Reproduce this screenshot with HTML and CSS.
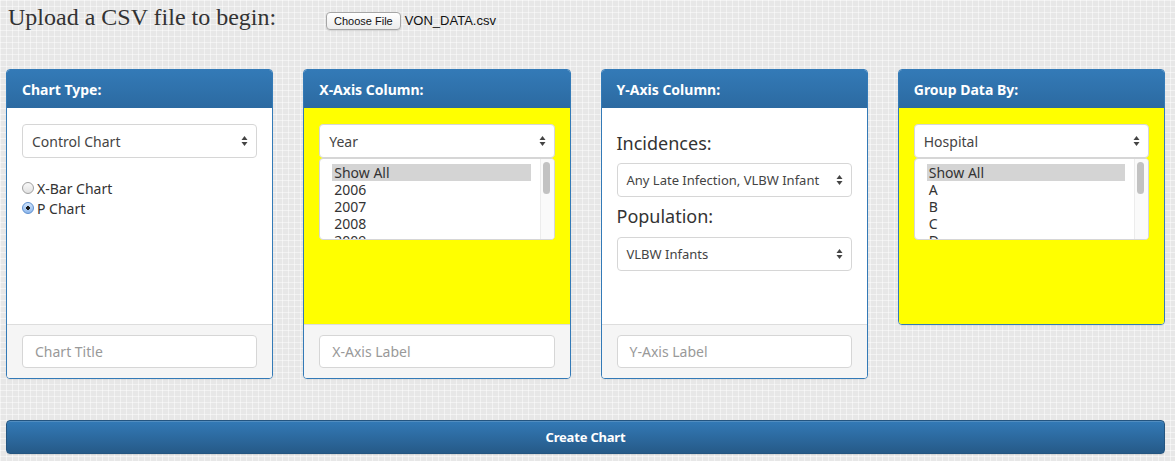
FILE: index.html
```html
<!DOCTYPE html>
<html>
<head>
<meta charset="utf-8">
<title>Control Chart Builder</title>
<link rel="stylesheet" href="styles.css">
</head>
<body>
<div class="upload-row">
  <h1 class="upload-title">Upload a CSV file to begin:</h1>
  <span class="file-btn">Choose File</span>
  <span class="file-name">VON_DATA.csv</span>
</div>

<div class="panels">
  <section class="panel">
    <div class="panel-heading">Chart Type:</div>
    <div class="panel-body">
      <div class="select"><span>Control Chart</span><svg class="arrows" width="7" height="12" viewBox="0 0 7 12"><path d="M3.5 1 L6.5 5 L0.5 5 Z M3.5 11 L6.5 7 L0.5 7 Z" fill="#444"/></svg></div>
      <div class="radios">
        <label class="radio"><span class="radio-dot"></span>X-Bar Chart</label>
        <label class="radio"><span class="radio-dot checked"></span>P Chart</label>
      </div>
    </div>
    <div class="panel-footer"><div class="text-input">Chart Title</div></div>
  </section>

  <section class="panel">
    <div class="panel-heading">X-Axis Column:</div>
    <div class="panel-body yellow">
      <div class="select"><span>Year</span><svg class="arrows" width="7" height="12" viewBox="0 0 7 12"><path d="M3.5 1 L6.5 5 L0.5 5 Z M3.5 11 L6.5 7 L0.5 7 Z" fill="#444"/></svg></div>
      <div class="listbox">
        <ul class="options">
          <li class="selected">Show All</li>
          <li>2006</li>
          <li>2007</li>
          <li>2008</li>
          <li>2009</li>
        </ul>
        <div class="scrollbar"><div class="thumb"></div></div>
      </div>
    </div>
    <div class="panel-footer"><div class="text-input">X-Axis Label</div></div>
  </section>

  <section class="panel">
    <div class="panel-heading">Y-Axis Column:</div>
    <div class="panel-body">
      <div class="field-label">Incidences:</div>
      <div class="select small"><span>Any Late Infection, VLBW Infant</span><svg class="arrows" width="7" height="12" viewBox="0 0 7 12"><path d="M3.5 1 L6.5 5 L0.5 5 Z M3.5 11 L6.5 7 L0.5 7 Z" fill="#444"/></svg></div>
      <div class="field-label second">Population:</div>
      <div class="select small"><span>VLBW Infants</span><svg class="arrows" width="7" height="12" viewBox="0 0 7 12"><path d="M3.5 1 L6.5 5 L0.5 5 Z M3.5 11 L6.5 7 L0.5 7 Z" fill="#444"/></svg></div>
    </div>
    <div class="panel-footer"><div class="text-input">Y-Axis Label</div></div>
  </section>

  <section class="panel no-footer">
    <div class="panel-heading">Group Data By:</div>
    <div class="panel-body yellow">
      <div class="select"><span>Hospital</span><svg class="arrows" width="7" height="12" viewBox="0 0 7 12"><path d="M3.5 1 L6.5 5 L0.5 5 Z M3.5 11 L6.5 7 L0.5 7 Z" fill="#444"/></svg></div>
      <div class="listbox">
        <ul class="options">
          <li class="selected">Show All</li>
          <li>A</li>
          <li>B</li>
          <li>C</li>
          <li>D</li>
        </ul>
        <div class="scrollbar"><div class="thumb"></div></div>
      </div>
    </div>
  </section>
</div>

<div class="actions">
  <button class="create-btn">Create Chart</button>
</div>
</body>
</html>
```

FILE: styles.css
```css
* { box-sizing: border-box; }

html, body { height: 100%; }

body {
  margin: 0;
  font-family: "Noto Sans", "Open Sans", sans-serif;
  color: #333;
  background-color: #e7e7e7;
  background-image:
    linear-gradient(90deg, rgba(255,255,255,0.45) 1px, transparent 1px),
    linear-gradient(rgba(255,255,255,0.45) 1px, transparent 1px);
  background-size: 6px 6px;
  overflow: hidden;
}

/* upload row */
.upload-row {
  display: flex;
  align-items: baseline;
  height: 69px;
  padding: 3px 0 0 8px;
}

.upload-title {
  margin: 0;
  font-family: "Liberation Serif", "DejaVu Serif", serif;
  font-weight: normal;
  font-size: 24px;
  line-height: 28px;
  color: #333;
  width: 318px;
}

.file-btn {
  display: inline-block;
  height: 18px;
  padding: 0 7px;
  border: 1px solid #a6a6a6;
  border-radius: 4px;
  background: linear-gradient(#ffffff, #ececec);
  font-family: "Liberation Sans", Arial, sans-serif;
  font-size: 11px;
  line-height: 16px;
  color: #111;
  box-shadow: 0 1px 1px rgba(0,0,0,0.12);
}

.file-name {
  margin-left: 4px;
  font-family: "Liberation Sans", Arial, sans-serif;
  font-size: 13px;
  color: #111;
}

/* panels */
.panels {
  display: grid;
  grid-template-columns: repeat(4, 1fr);
  column-gap: 30px;
  align-items: start;
  padding: 0 10px 0 6px;
}

.panel {
  border: 1px solid #337ab7;
  border-radius: 4px;
  background: #fff;
  overflow: hidden;
  box-shadow: 0 1px 1px rgba(0,0,0,0.05);
}

.panel-heading {
  height: 38px;
  display: flex;
  align-items: center;
  padding: 0 15px;
  background: linear-gradient(#337ab7, #2c6aa1);
  color: #fff;
  font-weight: bold;
  font-size: 14px;
}

.panel-body {
  height: 216px;
  padding: 16px 15px;
  background: #fff;
}

.panel-body.yellow { background: #ffff00; }

.panel-footer {
  border-top: 1px solid #ddd;
  background: #f5f5f5;
  padding: 10px 15px 10px;
}

/* controls */
.select {
  position: relative;
  height: 34px;
  display: flex;
  align-items: center;
  padding: 0 22px 0 9px;
  background: #fff;
  border: 1px solid #d6d6d6;
  border-radius: 4px;
  font-size: 14px;
  color: #444;
  white-space: nowrap;
}

.select.small { font-size: 13px; }

.select .arrows {
  position: absolute;
  right: 8px;
  top: 10px;
}

.radios {
  margin-top: 20px;
}

.radio {
  display: flex;
  align-items: center;
  height: 20px;
  font-size: 14px;
  color: #333;
}

.radio-dot {
  width: 12px;
  height: 12px;
  margin-right: 3px;
  border-radius: 50%;
  border: 1px solid #a0a0a0;
  background: linear-gradient(#f8f8f8, #e2e2e2);
}

.radio-dot.checked {
  border-color: #5d8fcf;
  background: radial-gradient(circle, #1a1a1a 0 1.6px, transparent 2.1px), linear-gradient(#cfe3fb, #8fb8ec);
}

.listbox {
  display: flex;
  margin-top: 0;
  height: 82px;
  background: #fff;
  border: 1px solid #d6d6d6;
  border-radius: 4px;
  overflow: hidden;
}

.options {
  flex: 1;
  list-style: none;
  margin: 0;
  padding: 5px 9px 0 12px;
  font-size: 14px;
  line-height: 17px;
  color: #333;
}

.options li { padding-left: 2px; height: 17px; }

.options li.selected { background: #d4d4d4; }

.scrollbar {
  width: 14px;
  border-left: 1px solid #ececec;
  background: #fafafa;
  padding: 3px 0 0 2px;
}

.thumb {
  width: 7px;
  height: 32px;
  border-radius: 4px;
  background: #c2c2c2;
}

.field-label {
  font-size: 18px;
  line-height: 24px;
  margin: 7px 0 8px;
  color: #333;
}

.field-label.second { margin: 7px 0 9px; }

.text-input {
  height: 33px;
  display: flex;
  align-items: center;
  padding: 0 12px;
  background: #fff;
  border: 1px solid #d6d6d6;
  border-radius: 4px;
  font-size: 14px;
  color: #999;
}

/* action */
.actions {
  padding: 41px 10px 0 6px;
}

.create-btn {
  display: block;
  width: 100%;
  height: 34px;
  border: 1px solid #245580;
  border-radius: 4px;
  background: linear-gradient(#337ab7, #265a88);
  color: #fff;
  font-family: "Noto Sans", "Open Sans", sans-serif;
  font-weight: bold;
  font-size: 13px;
  letter-spacing: -0.2px;
  box-shadow: inset 0 1px 0 rgba(255,255,255,0.15), 0 1px 1px rgba(0,0,0,0.075);
}
```
